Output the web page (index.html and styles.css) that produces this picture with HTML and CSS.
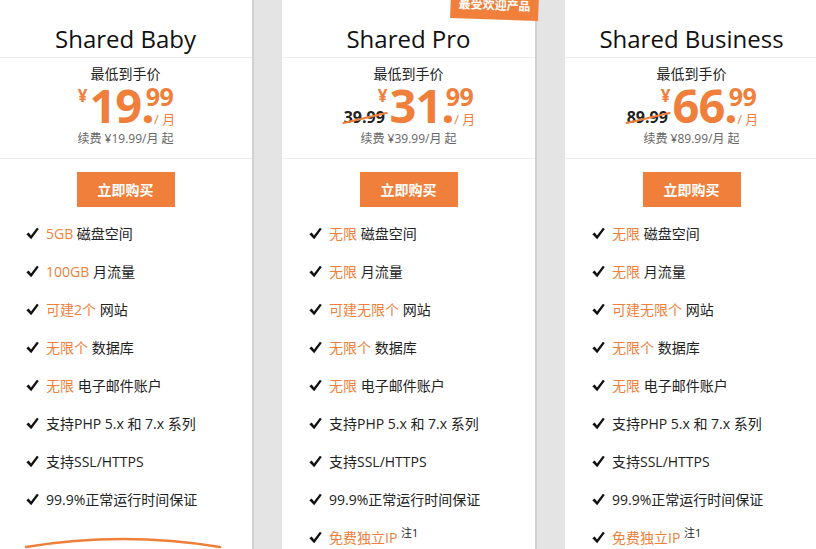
FILE: index.html
```html
<!DOCTYPE html>
<html lang="zh">
<head>
<meta charset="utf-8">
<link rel="stylesheet" href="styles.css">
</head>
<body>
<div class="plans">
  <div class="card">
    <div class="title">Shared Baby</div>
    <div class="price-box">
      <div class="label">最低到手价</div>
      <div class="price"><span class="cur">¥</span><span class="big">19.</span><span class="dec"><span class="cents">99</span><span class="per">/ 月</span></span></div>
      <div class="renew">续费 ¥19.99/月 起</div>
    </div>
    <div class="buy-row"><a class="buy">立即购买</a></div>
    <ul class="features">
      <li><svg class="chk" viewBox="0 0 12 12"><path d="M0.3 6.7 L2.5 5.0 L4.6 7.9 L10.1 0.6 L11.8 1.9 L4.8 11.4 Z"/></svg><span class="hl">5GB</span>&nbsp;磁盘空间</li>
      <li><svg class="chk" viewBox="0 0 12 12"><path d="M0.3 6.7 L2.5 5.0 L4.6 7.9 L10.1 0.6 L11.8 1.9 L4.8 11.4 Z"/></svg><span class="hl">100GB</span>&nbsp;月流量</li>
      <li><svg class="chk" viewBox="0 0 12 12"><path d="M0.3 6.7 L2.5 5.0 L4.6 7.9 L10.1 0.6 L11.8 1.9 L4.8 11.4 Z"/></svg><span class="hl">可建2个</span>&nbsp;网站</li>
      <li><svg class="chk" viewBox="0 0 12 12"><path d="M0.3 6.7 L2.5 5.0 L4.6 7.9 L10.1 0.6 L11.8 1.9 L4.8 11.4 Z"/></svg><span class="hl">无限个</span>&nbsp;数据库</li>
      <li><svg class="chk" viewBox="0 0 12 12"><path d="M0.3 6.7 L2.5 5.0 L4.6 7.9 L10.1 0.6 L11.8 1.9 L4.8 11.4 Z"/></svg><span class="hl">无限</span>&nbsp;电子邮件账户</li>
      <li><svg class="chk" viewBox="0 0 12 12"><path d="M0.3 6.7 L2.5 5.0 L4.6 7.9 L10.1 0.6 L11.8 1.9 L4.8 11.4 Z"/></svg>支持PHP 5.x 和 7.x 系列</li>
      <li><svg class="chk" viewBox="0 0 12 12"><path d="M0.3 6.7 L2.5 5.0 L4.6 7.9 L10.1 0.6 L11.8 1.9 L4.8 11.4 Z"/></svg>支持SSL/HTTPS</li>
      <li><svg class="chk" viewBox="0 0 12 12"><path d="M0.3 6.7 L2.5 5.0 L4.6 7.9 L10.1 0.6 L11.8 1.9 L4.8 11.4 Z"/></svg>99.9%正常运行时间保证</li>
    </ul>
    <svg class="more" viewBox="0 0 200 20" width="200" height="20"><path d="M1 17 Q98 1 195 17" fill="none" stroke="#ef7f3a" stroke-width="2.5" stroke-linecap="round"/></svg>
  </div>

  <div class="card">
    <div class="badge"><span>最受欢迎产品</span></div>
    <div class="title">Shared Pro</div>
    <div class="price-box">
      <div class="label">最低到手价</div>
      <div class="price"><span class="old">39.99</span><span class="cur">¥</span><span class="big">31.</span><span class="dec"><span class="cents">99</span><span class="per">/ 月</span></span></div>
      <div class="renew">续费 ¥39.99/月 起</div>
    </div>
    <div class="buy-row"><a class="buy">立即购买</a></div>
    <ul class="features">
      <li><svg class="chk" viewBox="0 0 12 12"><path d="M0.3 6.7 L2.5 5.0 L4.6 7.9 L10.1 0.6 L11.8 1.9 L4.8 11.4 Z"/></svg><span class="hl">无限</span>&nbsp;磁盘空间</li>
      <li><svg class="chk" viewBox="0 0 12 12"><path d="M0.3 6.7 L2.5 5.0 L4.6 7.9 L10.1 0.6 L11.8 1.9 L4.8 11.4 Z"/></svg><span class="hl">无限</span>&nbsp;月流量</li>
      <li><svg class="chk" viewBox="0 0 12 12"><path d="M0.3 6.7 L2.5 5.0 L4.6 7.9 L10.1 0.6 L11.8 1.9 L4.8 11.4 Z"/></svg><span class="hl">可建无限个</span>&nbsp;网站</li>
      <li><svg class="chk" viewBox="0 0 12 12"><path d="M0.3 6.7 L2.5 5.0 L4.6 7.9 L10.1 0.6 L11.8 1.9 L4.8 11.4 Z"/></svg><span class="hl">无限个</span>&nbsp;数据库</li>
      <li><svg class="chk" viewBox="0 0 12 12"><path d="M0.3 6.7 L2.5 5.0 L4.6 7.9 L10.1 0.6 L11.8 1.9 L4.8 11.4 Z"/></svg><span class="hl">无限</span>&nbsp;电子邮件账户</li>
      <li><svg class="chk" viewBox="0 0 12 12"><path d="M0.3 6.7 L2.5 5.0 L4.6 7.9 L10.1 0.6 L11.8 1.9 L4.8 11.4 Z"/></svg>支持PHP 5.x 和 7.x 系列</li>
      <li><svg class="chk" viewBox="0 0 12 12"><path d="M0.3 6.7 L2.5 5.0 L4.6 7.9 L10.1 0.6 L11.8 1.9 L4.8 11.4 Z"/></svg>支持SSL/HTTPS</li>
      <li><svg class="chk" viewBox="0 0 12 12"><path d="M0.3 6.7 L2.5 5.0 L4.6 7.9 L10.1 0.6 L11.8 1.9 L4.8 11.4 Z"/></svg>99.9%正常运行时间保证</li>
      <li><svg class="chk" viewBox="0 0 12 12"><path d="M0.3 6.7 L2.5 5.0 L4.6 7.9 L10.1 0.6 L11.8 1.9 L4.8 11.4 Z"/></svg><span class="hl">免费独立IP</span>&nbsp;<sup>注1</sup></li>
    </ul>
  </div>

  <div class="card">
    <div class="title">Shared Business</div>
    <div class="price-box">
      <div class="label">最低到手价</div>
      <div class="price"><span class="old">89.99</span><span class="cur">¥</span><span class="big">66.</span><span class="dec"><span class="cents">99</span><span class="per">/ 月</span></span></div>
      <div class="renew">续费 ¥89.99/月 起</div>
    </div>
    <div class="buy-row"><a class="buy">立即购买</a></div>
    <ul class="features">
      <li><svg class="chk" viewBox="0 0 12 12"><path d="M0.3 6.7 L2.5 5.0 L4.6 7.9 L10.1 0.6 L11.8 1.9 L4.8 11.4 Z"/></svg><span class="hl">无限</span>&nbsp;磁盘空间</li>
      <li><svg class="chk" viewBox="0 0 12 12"><path d="M0.3 6.7 L2.5 5.0 L4.6 7.9 L10.1 0.6 L11.8 1.9 L4.8 11.4 Z"/></svg><span class="hl">无限</span>&nbsp;月流量</li>
      <li><svg class="chk" viewBox="0 0 12 12"><path d="M0.3 6.7 L2.5 5.0 L4.6 7.9 L10.1 0.6 L11.8 1.9 L4.8 11.4 Z"/></svg><span class="hl">可建无限个</span>&nbsp;网站</li>
      <li><svg class="chk" viewBox="0 0 12 12"><path d="M0.3 6.7 L2.5 5.0 L4.6 7.9 L10.1 0.6 L11.8 1.9 L4.8 11.4 Z"/></svg><span class="hl">无限个</span>&nbsp;数据库</li>
      <li><svg class="chk" viewBox="0 0 12 12"><path d="M0.3 6.7 L2.5 5.0 L4.6 7.9 L10.1 0.6 L11.8 1.9 L4.8 11.4 Z"/></svg><span class="hl">无限</span>&nbsp;电子邮件账户</li>
      <li><svg class="chk" viewBox="0 0 12 12"><path d="M0.3 6.7 L2.5 5.0 L4.6 7.9 L10.1 0.6 L11.8 1.9 L4.8 11.4 Z"/></svg>支持PHP 5.x 和 7.x 系列</li>
      <li><svg class="chk" viewBox="0 0 12 12"><path d="M0.3 6.7 L2.5 5.0 L4.6 7.9 L10.1 0.6 L11.8 1.9 L4.8 11.4 Z"/></svg>支持SSL/HTTPS</li>
      <li><svg class="chk" viewBox="0 0 12 12"><path d="M0.3 6.7 L2.5 5.0 L4.6 7.9 L10.1 0.6 L11.8 1.9 L4.8 11.4 Z"/></svg>99.9%正常运行时间保证</li>
      <li><svg class="chk" viewBox="0 0 12 12"><path d="M0.3 6.7 L2.5 5.0 L4.6 7.9 L10.1 0.6 L11.8 1.9 L4.8 11.4 Z"/></svg><span class="hl">免费独立IP</span>&nbsp;<sup>注1</sup></li>
    </ul>
  </div>
</div>
</body>
</html>
```

FILE: styles.css
```css
html, body {
  margin: 0;
  padding: 0;
  height: 100%;
  overflow: hidden;
}
body {
  background: #e4e4e4;
  font-family: "Open Sans", "Noto Sans CJK SC", sans-serif;
  color: #333;
}
.plans {
  display: flex;
  gap: 30px;
  margin-left: -1px;
  height: 549px;
  overflow: hidden;
}
.card {
  position: relative;
  flex: 0 0 253px;
  background: #fff;
  box-shadow: 2px 0 0 #d0d0d0;
  display: flex;
  flex-direction: column;
}
.card > * {
  flex: none;
}
.title {
  height: 58px;
  border-bottom: 1px solid #ececec;
  box-sizing: border-box;
  padding-top: 20px;
  text-align: center;
  font-size: 24px;
  line-height: 38px;
  color: #111;
}
.price-box {
  height: 101px;
  border-bottom: 1px solid #ececec;
  box-sizing: border-box;
  display: flex;
  flex-direction: column;
  align-items: center;
}
.label {
  margin-top: 6px;
  font-size: 14px;
  line-height: 20px;
  color: #222;
}
.price {
  display: flex;
  align-items: flex-start;
  height: 40px;
  margin-top: 1px;
  color: #ef7f3a;
  font-weight: 700;
}
.old {
  position: relative;
  align-self: flex-end;
  font-size: 16px;
  line-height: 16px;
  color: #222;
  margin-right: -7px;
}
.old::after {
  content: "";
  position: absolute;
  left: -2px;
  right: -3px;
  top: 8px;
  height: 1.6px;
  background: #ef7f3a;
  transform: rotate(-13deg);
}
.cur {
  font-size: 17px;
  line-height: 20px;
  margin-top: 1px;
  margin-right: 2px;
}
.big {
  font-size: 47px;
  line-height: 40px;
  letter-spacing: -1px;
}
.dec {
  display: flex;
  flex-direction: column;
  align-items: flex-end;
  margin-left: -8px;
}
.cents {
  font-size: 25px;
  line-height: 22px;
  letter-spacing: -0.5px;
}
.per {
  font-size: 13px;
  font-weight: 400;
  line-height: 16px;
  margin-top: 4px;
  margin-right: -2px;
}
.renew {
  margin-top: 6px;
  font-size: 12px;
  line-height: 16px;
  color: #666;
}
.buy-row {
  display: flex;
  justify-content: center;
  padding-top: 13px;
}
.buy {
  width: 98px;
  height: 35px;
  background: #ef7f3a;
  color: #fff;
  font-weight: 700;
  font-size: 14px;
  line-height: 35px;
  text-align: center;
}
.features {
  list-style: none;
  margin: 7px 0 0;
  padding: 0 0 0 27px;
}
.features li {
  height: 38px;
  display: flex;
  align-items: center;
  font-size: 14px;
  color: #222;
}
.chk {
  width: 13px;
  height: 13px;
  margin-right: 7px;
  fill: #111;
  flex: none;
}
.hl {
  color: #ef7f3a;
}
.features sup {
  font-size: 11px;
  position: relative;
  top: -5px;
  vertical-align: baseline;
}
.more {
  display: block;
  margin: 12px 0 0 26px;
}
.badge {
  position: absolute;
  top: -7px;
  right: -4px;
  width: 88px;
  height: 28px;
  background: #ef7f3a;
  transform: rotate(2deg);
  transform-origin: right top;
  display: flex;
  align-items: flex-end;
  justify-content: center;
  z-index: 2;
}
.badge span {
  color: #fff;
  font-size: 12px;
  font-weight: 700;
  line-height: 18px;
  margin-bottom: 5px;
}
```
